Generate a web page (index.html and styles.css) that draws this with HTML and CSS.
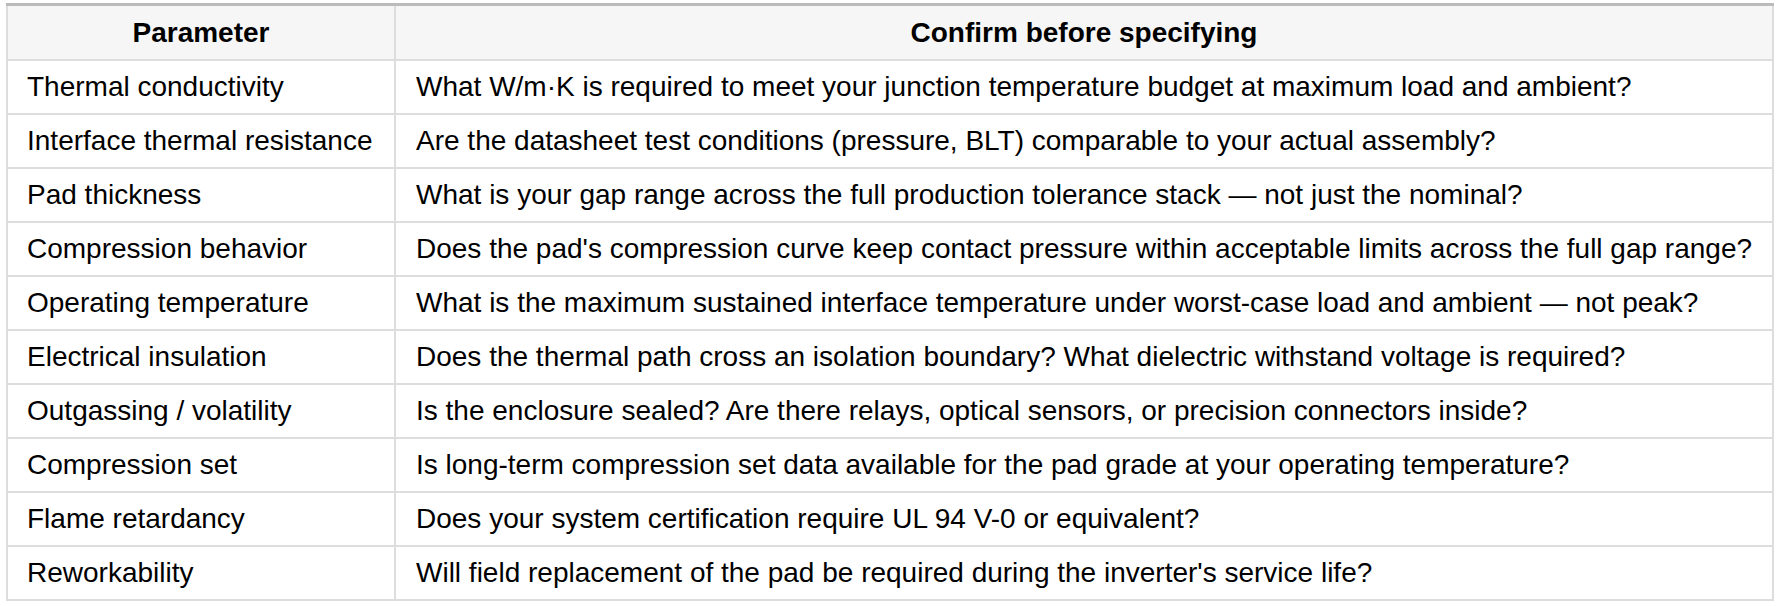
FILE: index.html
```html
<!DOCTYPE html>
<html lang="en">
<head>
<meta charset="utf-8">
<title>Thermal pad specification checklist</title>
<link rel="stylesheet" href="styles.css">
</head>
<body>
<div class="page">
  <table class="spec-table">
    <thead>
      <tr>
        <th class="col-param">Parameter</th>
        <th class="col-confirm">Confirm before specifying</th>
      </tr>
    </thead>
    <tbody>
      <tr><td>Thermal conductivity</td><td>What W/m·K is required to meet your junction temperature budget at maximum load and ambient?</td></tr>
      <tr><td>Interface thermal resistance</td><td>Are the datasheet test conditions (pressure, BLT) comparable to your actual assembly?</td></tr>
      <tr><td>Pad thickness</td><td>What is your gap range across the full production tolerance stack — not just the nominal?</td></tr>
      <tr><td>Compression behavior</td><td>Does the pad's compression curve keep contact pressure within acceptable limits across the full gap range?</td></tr>
      <tr><td>Operating temperature</td><td>What is the maximum sustained interface temperature under worst-case load and ambient — not peak?</td></tr>
      <tr><td>Electrical insulation</td><td>Does the thermal path cross an isolation boundary? What dielectric withstand voltage is required?</td></tr>
      <tr><td>Outgassing / volatility</td><td>Is the enclosure sealed? Are there relays, optical sensors, or precision connectors inside?</td></tr>
      <tr><td>Compression set</td><td>Is long-term compression set data available for the pad grade at your operating temperature?</td></tr>
      <tr><td>Flame retardancy</td><td>Does your system certification require UL 94 V-0 or equivalent?</td></tr>
      <tr><td>Reworkability</td><td>Will field replacement of the pad be required during the inverter's service life?</td></tr>
    </tbody>
  </table>
</div>
</body>
</html>
```
FILE: styles.css
```css
html, body {
  margin: 0;
  padding: 0;
  background: #ffffff;
}

.page {
  padding: 3px 6px 0 6px;
}

.spec-table {
  width: 1768px;
  table-layout: fixed;
  border-collapse: separate;
  border-spacing: 0;
  border-top: 3px solid #bbbbbb;
  font-family: "Liberation Sans", Arial, sans-serif;
  font-size: 28px;
  color: #000000;
}

.spec-table th,
.spec-table td {
  border-right: 2px solid #dddddd;
  border-bottom: 2px solid #dddddd;
  white-space: nowrap;
  vertical-align: middle;
  box-sizing: border-box;
  line-height: 32px;
}

.spec-table th:first-child,
.spec-table td:first-child {
  border-left: 2px solid #dddddd;
}

.spec-table th {
  background: #f6f6f6;
  font-weight: bold;
  text-align: center;
  padding: 0 8px;
  height: 55px;
}

.spec-table td {
  text-align: left;
  padding: 0 12px 0 20px;
  height: 54px;
}

.spec-table td:first-child {
  padding-left: 19px;
}

.col-param {
  width: 390px;
}
```
